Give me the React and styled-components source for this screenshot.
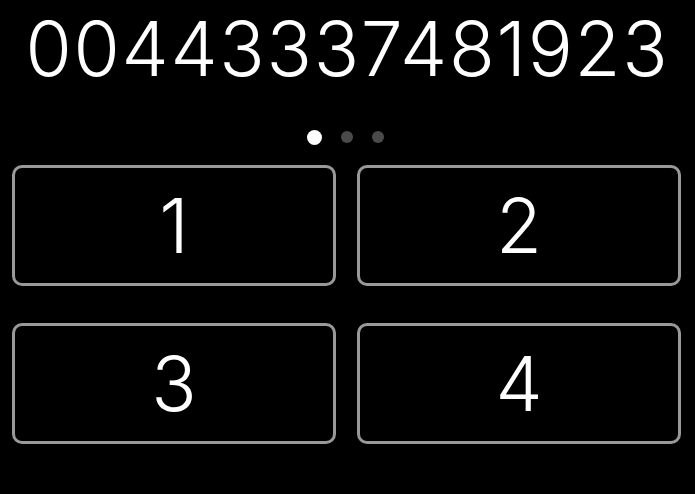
import React from "react";
import styled, { createGlobalStyle } from "styled-components";

const Global = createGlobalStyle`
  html, body { margin: 0; padding: 0; background: #000; }
  body { width: 695px; height: 494px; overflow: hidden; font-family: Inter, "Noto Sans", sans-serif; }
`;

const Screen = styled.div`
  width: 695px;
  height: 494px;
  background: #000;
  display: flex;
  flex-direction: column;
`;

const Number = styled.div`
  height: 96px;
  display: flex;
  align-items: center;
  justify-content: center;
  color: #fff;
  font-size: 75px;
  font-weight: 300;
  letter-spacing: 1.7px;
  line-height: 1;
`;

const Dots = styled.div`
  height: 69px;
  padding: 13px 4px 0 0;
  box-sizing: border-box;
  display: flex;
  align-items: center;
  justify-content: center;
  gap: 19px;
`;

const Dot = styled.span`
  width: ${(p) => (p.$active ? 15 : 12)}px;
  height: ${(p) => (p.$active ? 15 : 12)}px;
  border-radius: 50%;
  background: ${(p) => (p.$active ? "#fff" : "#4a4a4a")};
`;

const Grid = styled.div`
  display: grid;
  grid-template-columns: 1fr 1fr;
  grid-auto-rows: 121px;
  column-gap: 21px;
  row-gap: 37px;
  padding: 0 14px 0 12px;
`;

const Key = styled.button`
  box-sizing: border-box;
  background: #000;
  border: 3px solid #999;
  border-radius: 10px;
  color: #fff;
  font-family: Inter, "Noto Sans", sans-serif;
  font-size: 75px;
  font-weight: 300;
  line-height: 1;
  display: flex;
  align-items: center;
  justify-content: center;
  padding: 0;
`;

export default function App() {
  return (
    <>
      <Global />
      <Screen>
        <Number>00443337481923</Number>
        <Dots>
          <Dot $active />
          <Dot />
          <Dot />
        </Dots>
        <Grid>
          {[1, 2, 3, 4].map((n) => (
            <Key key={n}>{n}</Key>
          ))}
        </Grid>
      </Screen>
    </>
  );
}
